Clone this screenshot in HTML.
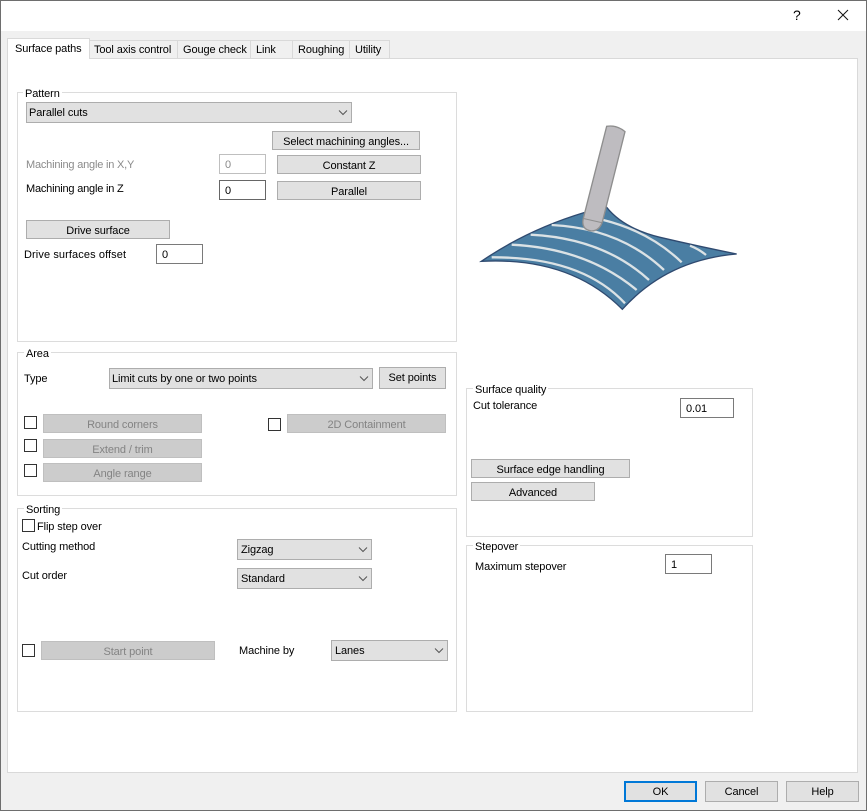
<!DOCTYPE html>
<html><head><meta charset="utf-8"><style>
html,body{margin:0;padding:0;width:867px;height:811px;overflow:hidden;background:#f0f0f0}
*{box-sizing:border-box}
body{font-family:"Liberation Sans",sans-serif;font-size:11px;letter-spacing:-.1px;color:#000;position:relative}
div,span.a{position:absolute;white-space:nowrap}
.t{line-height:16px;height:16px}
.b{background:#e1e1e1;border:1px solid #adadad;text-align:center;line-height:20px}
.d{background:#ccc;border:1px solid #bfbfbf;text-align:center;line-height:20px;color:#838383}
.c{background:#e1e1e1;border:1px solid #adadad;line-height:21px;padding-left:2px}
.c svg{position:absolute;right:3px;top:7px}
.i{background:#fff;border:1px solid #7a7a7a;line-height:20px;padding-left:5px}
.k{width:13px;height:13px;background:#fff;border:1px solid #333}
.g{border:1px solid #dcdcdc}
.l{background:#fff;padding:0 2px;line-height:14px;height:14px}
.tab{background:#f0f0f0;border:1px solid #d9d9d9;border-bottom:0;top:40px;height:18px;line-height:19px;padding-left:5px}
</style></head><body>
<div style="left:0;top:0;width:867px;height:31px;background:#fff"></div>
<div style="left:793px;top:6px;font-size:14px;line-height:18px;letter-spacing:0">?</div>
<svg style="position:absolute;left:837px;top:9px" width="12" height="12"><path d="M1 1L11 11M11 1L1 11" stroke="#111" stroke-width="1" fill="none"/></svg>

<div style="left:7px;top:58px;width:851px;height:715px;background:#fff;border:1px solid #d9d9d9"></div>
<div class="tab" style="left:89px;width:89px;padding-left:4px">Tool axis control</div>
<div class="tab" style="left:177px;width:74px">Gouge check</div>
<div class="tab" style="left:250px;width:43px">Link</div>
<div class="tab" style="left:292px;width:58px">Roughing</div>
<div class="tab" style="left:349px;width:41px">Utility</div>
<div style="left:7px;top:38px;width:83px;height:21px;background:#fff;border:1px solid #d9d9d9;border-bottom:0;line-height:20px;padding-left:7px">Surface paths</div>

<!-- Pattern -->
<div class="g" style="left:17px;top:92px;width:440px;height:250px"></div>
<div class="l" style="left:23px;top:87px">Pattern</div>
<div class="c" style="left:26px;top:102px;width:326px;height:21px">Parallel cuts<svg width="10" height="6"><path d="M1 .5L5 4.5L9 .5" stroke="#555" fill="none"/></svg></div>
<div class="b" style="left:272px;top:131px;width:148px;height:19px">Select machining angles...</div>
<div class="t" style="left:26px;top:157px;color:#8a8a8a;letter-spacing:-.2px">Machining angle in X,Y</div>
<div class="i" style="left:219px;top:154px;width:47px;height:20px;border-color:#bfbfbf;color:#8a8a8a">0</div>
<div class="b" style="left:277px;top:155px;width:144px;height:19px">Constant Z</div>
<div class="t" style="left:26px;top:181px;letter-spacing:-.2px">Machining angle in Z</div>
<div class="i" style="left:219px;top:180px;width:47px;height:20px;border-color:#666">0</div>
<div class="b" style="left:277px;top:181px;width:144px;height:19px">Parallel</div>
<div class="b" style="left:26px;top:220px;width:144px;height:19px">Drive surface</div>
<div class="t" style="left:24px;top:247px;letter-spacing:.1px">Drive surfaces offset</div>
<div class="i" style="left:156px;top:244px;width:47px;height:20px">0</div>

<!-- Illustration -->
<svg style="position:absolute;left:460px;top:100px" width="300" height="230" viewBox="0 0 900 690">
<path d="M64 484Q203 389 372 338L440 322Q490 385 600 412Q720 440 830 462Q620 480 487 628Q330 470 64 484Z" fill="#4a7ea3" stroke="#2f4a70" stroke-width="4" stroke-linejoin="miter"/>
<g fill="none" stroke="#dbe2e5" stroke-width="7">
<path d="M95 472Q365 470 495 610"/>
<path d="M155 434Q380 445 530 570"/>
<path d="M212 404Q430 415 567 540"/>
<path d="M275 375Q480 385 612 510"/>
<path d="M430 360Q570 395 665 487"/>
<path d="M690 437Q718 448 738 465"/>
</g>
<path d="M440 79Q470 74 495 95L428 362Q420 392 394 393Q362 388 370 355Z" fill="#bebcc0" stroke="#8e8e8e" stroke-width="4"/>
<path d="M372 356L425 368" stroke="#8e8e8e" stroke-width="3"/>
</svg>

<!-- Area -->
<div class="g" style="left:17px;top:352px;width:440px;height:144px"></div>
<div class="l" style="left:24px;top:347px">Area</div>
<div class="t" style="left:24px;top:371px">Type</div>
<div class="c" style="left:109px;top:368px;width:264px;height:21px">Limit cuts by one or two points<svg width="10" height="6"><path d="M1 .5L5 4.5L9 .5" stroke="#555" fill="none"/></svg></div>
<div class="b" style="left:379px;top:367px;width:67px;height:22px;line-height:21px">Set points</div>
<div class="k" style="left:24px;top:416px"></div>
<div class="d" style="left:43px;top:414px;width:159px;height:19px">Round corners</div>
<div class="k" style="left:24px;top:439px"></div>
<div class="d" style="left:43px;top:439px;width:159px;height:19px">Extend / trim</div>
<div class="k" style="left:24px;top:464px"></div>
<div class="d" style="left:43px;top:463px;width:159px;height:19px">Angle range</div>
<div class="k" style="left:268px;top:418px"></div>
<div class="d" style="left:287px;top:414px;width:159px;height:19px">2D Containment</div>

<!-- Sorting -->
<div class="g" style="left:17px;top:508px;width:440px;height:204px"></div>
<div class="l" style="left:24px;top:503px">Sorting</div>
<div class="k" style="left:22px;top:519px"></div>
<div class="t" style="left:37px;top:519px">Flip step over</div>
<div class="t" style="left:22px;top:539px">Cutting method</div>
<div class="c" style="left:237px;top:539px;width:135px;height:21px;padding-left:3px">Zigzag<svg width="10" height="6"><path d="M1 .5L5 4.5L9 .5" stroke="#555" fill="none"/></svg></div>
<div class="t" style="left:22px;top:568px">Cut order</div>
<div class="c" style="left:237px;top:568px;width:135px;height:21px;padding-left:3px">Standard<svg width="10" height="6"><path d="M1 .5L5 4.5L9 .5" stroke="#555" fill="none"/></svg></div>
<div class="k" style="left:22px;top:644px"></div>
<div class="d" style="left:41px;top:641px;width:174px;height:19px">Start point</div>
<div class="t" style="left:239px;top:643px">Machine by</div>
<div class="c" style="left:331px;top:640px;width:117px;height:21px;padding-left:3px">Lanes<svg width="10" height="6"><path d="M1 .5L5 4.5L9 .5" stroke="#555" fill="none"/></svg></div>

<!-- Surface quality -->
<div class="g" style="left:466px;top:388px;width:287px;height:149px"></div>
<div class="l" style="left:473px;top:383px">Surface quality</div>
<div class="t" style="left:473px;top:398px">Cut tolerance</div>
<div class="i" style="left:680px;top:398px;width:54px;height:20px">0.01</div>
<div class="b" style="left:471px;top:459px;width:159px;height:19px">Surface edge handling</div>
<div class="b" style="left:471px;top:482px;width:124px;height:19px">Advanced</div>

<!-- Stepover -->
<div class="g" style="left:466px;top:545px;width:287px;height:167px"></div>
<div class="l" style="left:473px;top:540px">Stepover</div>
<div class="t" style="left:475px;top:559px">Maximum stepover</div>
<div class="i" style="left:665px;top:554px;width:47px;height:20px">1</div>

<!-- Footer -->
<div class="b" style="left:624px;top:781px;width:73px;height:21px;border:2px solid #0078d7;line-height:19px">OK</div>
<div class="b" style="left:705px;top:781px;width:73px;height:21px;line-height:21px">Cancel</div>
<div class="b" style="left:786px;top:781px;width:73px;height:21px;line-height:21px">Help</div>

<!-- Window frame -->
<div style="left:0;top:0;width:867px;height:811px;border:1px solid #6e6e6e;pointer-events:none"></div>
</body></html>
